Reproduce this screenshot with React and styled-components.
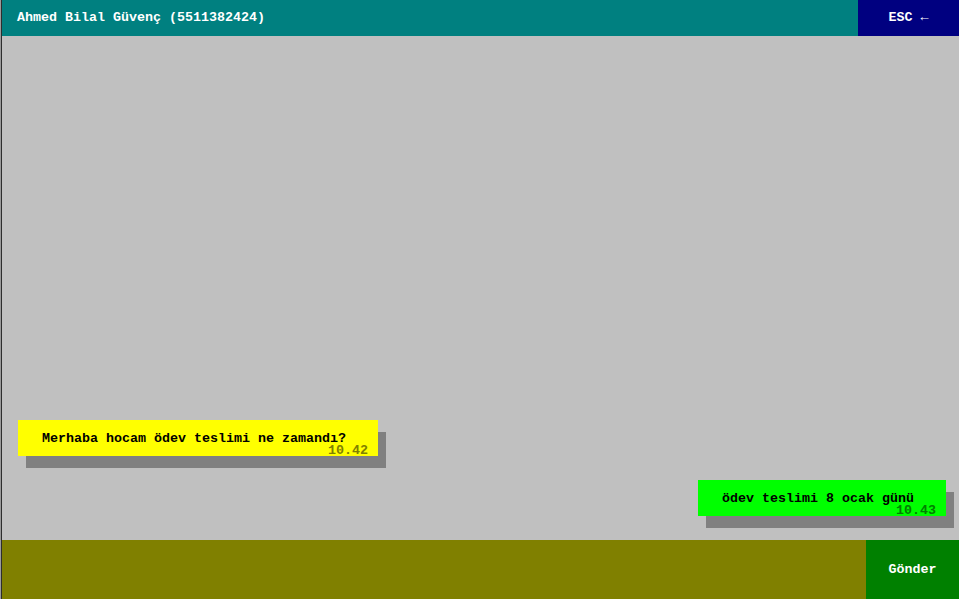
import React from 'react';
import styled, { createGlobalStyle } from 'styled-components';

const GlobalStyle = createGlobalStyle`
  html, body {
    margin: 0;
    padding: 0;
    background: #c0c0c0;
  }
  body {
    font-family: "Liberation Mono", "DejaVu Sans Mono", monospace;
    font-weight: bold;
    font-size: 13.33px;
  }
`;

// outer frame with the thin dark window edge on the left
const Frame = styled.div`
  height: 100vh;
  border-left: 1px solid #9a9a9a;
  box-sizing: border-box;
`;

const Window = styled.div`
  height: 100%;
  border-left: 1px solid #2e2e2e;
  display: flex;
  flex-direction: column;
  background: #c0c0c0;
`;

const TopBar = styled.header`
  height: 36px;
  display: flex;
  background: #008080;
  color: #ffffff;
  line-height: 36px;
`;

const Title = styled.div`
  flex: 1;
  padding-left: 15px;
  white-space: nowrap;
`;

const EscButton = styled.button`
  width: 101px;
  border: none;
  margin: 0;
  padding: 0;
  background: #000080;
  color: #ffffff;
  font: inherit;
  line-height: 36px;
  cursor: pointer;
`;

const Messages = styled.main`
  flex: 1;
  display: flex;
  flex-direction: column;
  justify-content: flex-end;
  gap: 24px;
  padding: 0 13px 24px 16px;
`;

const Bubble = styled.div`
  position: relative;
  align-self: ${p => (p.$mine ? 'flex-end' : 'flex-start')};
  height: 36px;
  box-sizing: border-box;
  padding: 12px 32px 0 24px;
  line-height: 13px;
  white-space: nowrap;
  color: #000000;
  background: ${p => (p.$mine ? '#00ff00' : '#ffff00')};
  box-shadow: 8px 12px 0 #808080;
`;

const Time = styled.span`
  position: absolute;
  right: 10px;
  bottom: 0;
  line-height: 11px;
  color: ${p => (p.$mine ? '#008000' : '#808000')};
`;

const BottomBar = styled.footer`
  height: 59px;
  display: flex;
  background: #808000;
`;

const Input = styled.input`
  flex: 1;
  border: none;
  outline: none;
  background: transparent;
  font: inherit;
  color: #ffffff;
  padding: 0 16px;
`;

const SendButton = styled.button`
  width: 93px;
  border: none;
  margin: 0;
  padding: 0;
  background: #008000;
  color: #ffffff;
  font: inherit;
  line-height: 59px;
  cursor: pointer;
`;

const messages = [
  { id: 1, text: 'Merhaba hocam ödev teslimi ne zamandı?', time: '10.42', mine: false },
  { id: 2, text: 'ödev teslimi 8 ocak günü', time: '10.43', mine: true },
];

const App = () => {
  return (
    <>
      <GlobalStyle />
      <Frame>
        <Window>
          <TopBar>
            <Title>Ahmed Bilal Güvenç (5511382424)</Title>
            <EscButton>ESC ←</EscButton>
          </TopBar>
          <Messages>
            {messages.map(m => (
              <Bubble key={m.id} $mine={m.mine}>
                {m.text}
                <Time $mine={m.mine}>{m.time}</Time>
              </Bubble>
            ))}
          </Messages>
          <BottomBar>
            <Input aria-label="Mesaj" />
            <SendButton>Gönder</SendButton>
          </BottomBar>
        </Window>
      </Frame>
    </>
  );
};

export default App;
